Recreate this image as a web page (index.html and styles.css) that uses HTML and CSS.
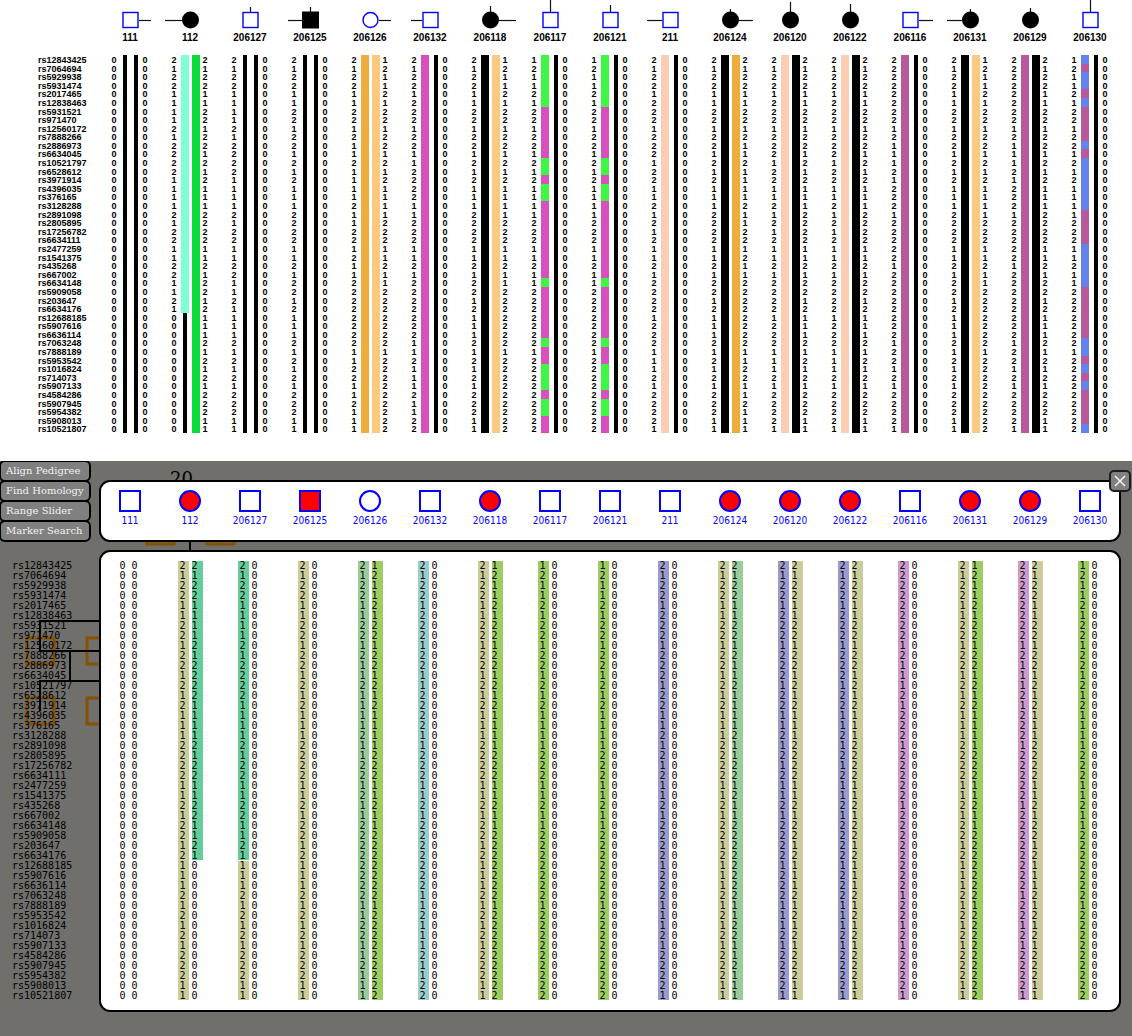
FILE: index.html
```html
<!DOCTYPE html>
<html lang="en">
<head>
  <meta charset="utf-8">
  <title>Haplotype viewer</title>
  <link rel="stylesheet" href="styles.css">
</head>
<body>
  <section class="print-view" aria-label="Printed haplotypes">
    <table class="bars">
      <thead><tr class="line" id="print-head"><td></td></tr></thead>
      <tbody class="bars-body" id="print-body"></tbody>
    </table>
  </section>

  <main class="viewer">
    <svg class="pedigree" width="1132" height="300" aria-hidden="true">
      <g class="kin">
        <rect x="147" y="54" width="27" height="29"/>
        <rect x="207" y="54" width="27" height="29"/>
        <rect x="27" y="177" width="27" height="26"/>
        <rect x="87" y="177" width="27" height="26"/>
        <rect x="27" y="237" width="27" height="26"/>
        <rect x="87" y="237" width="27" height="26"/>
      </g>
      <path class="descent" d="M190 70V100M110 160H40V190H110M70 190V220M110 220H40V250"/>
      <text class="generation" x="170" y="24">20</text>
    </svg>

    <div class="top-row">
      <nav class="tools">
        <button type="button">Align Pedigree</button>
        <button type="button">Find Homology</button>
        <button type="button">Range Slider</button>
        <button type="button">Marker Search</button>
      </nav>
      <div class="people-panel">
        <ul class="people" id="people"></ul>
      </div>
    </div>

    <table class="alleles">
      <tbody class="alleles-body" id="viewer-body"></tbody>
    </table>

    <button type="button" class="close" aria-label="Close">
      <svg width="18" height="18" viewBox="0 0 18 18"><path d="M4 4L14 14M14 4L4 14"/></svg>
    </button>
  </main>
  <script src="haplotypes.js"></script>
</body>
</html>
```
FILE: styles.css
```css
* {
  box-sizing: border-box;
}

body {
  margin: 0;
  background: #fff;
  color: #000;
}

table {
  display: block;
  border-spacing: 0;
}

thead {
  display: block;
}

td,
th {
  padding: 0;
  font-weight: inherit;
  text-align: left;
}

.line {
  display: grid;
  grid-template-columns: 100px repeat(17, minmax(0, 1fr));
  padding-right: 12px;
}

/* printed view */

.print-view {
  padding-bottom: 28px;
  font: bold 9px/8px "Liberation Sans", Arial, sans-serif;
}

.bars .person {
  height: 55px;
  font-size: 10px;
  line-height: 12px;
  text-align: center;
}

.person svg {
  display: block;
  margin: 0 auto;
  overflow: visible;
}

.bars-body {
  display: grid;
  grid-template-rows: repeat(44, minmax(0, 1fr));
  height: 378px;
}

.bars .marker {
  padding: 1px 0 0 38px;
}

.bars .pair {
  display: grid;
  grid-template-columns: 6px 8px 8px 6px;
  column-gap: 3px;
  justify-content: center;
}

.bars .allele {
  padding-top: 1px;
}

.bar {
  background: #000;
}

.bar.thin {
  width: 4px;
  margin-left: 2px;
}

.bar.aqua { background: #7fffd4; }
.bar.emerald { background: #0bdb3c; }
.bar.amber { background: #edad3c; }
.bar.apricot { background: #fdc97f; }
.bar.magenta { background: #d94fbd; }
.bar.lime { background: #3ff546; }
.bar.peach { background: #fccdb2; }
.bar.plum { background: #ba589c; }
.bar.blue { background: #6482eb; }

.stroke-own {
  fill: #fff;
  stroke: #00f;
  stroke-width: 1.4;
}

.fill-own {
  fill: #000;
}

.tie {
  stroke: #111;
  stroke-width: 1.2;
}

/* interactive view */

.viewer {
  position: relative;
  overflow: hidden;
  padding-bottom: 24px;
  background: #706f6c;
}

.pedigree {
  position: absolute;
  left: 0;
  top: 0;
}

.kin {
  fill: none;
  stroke: #855300;
  stroke-width: 3;
}

.descent {
  fill: none;
  stroke: #000;
  stroke-width: 2;
}

.generation {
  font: 18px "DejaVu Serif", serif;
}

.top-row {
  position: relative;
  display: flex;
  align-items: flex-end;
  gap: 8px;
  margin: -1px 11px 0 -1px;
}

.tools {
  display: flex;
  flex-direction: column;
  width: 92px;
}

.tools button {
  height: 22px;
  margin-bottom: -2px;
  padding: 0 0 0 5px;
  border: 2px solid #000;
  border-radius: 6px;
  background: #808080;
  color: #f2f2f2;
  font: 10px/18px "DejaVu Serif", serif;
  text-align: left;
  white-space: nowrap;
}

.tools button:last-child {
  margin-bottom: 0;
}

.people-panel {
  flex: 1;
  height: 62px;
  padding-top: 8px;
  border: 2px solid #000;
  border-radius: 11px;
  background: #fff;
}

.people {
  display: grid;
  grid-template-columns: repeat(17, minmax(0, 1fr));
  margin: 0 -1px;
  padding: 0;
  list-style: none;
  color: #00f;
  font: 10px/18px "DejaVu Sans Condensed", "DejaVu Sans", sans-serif;
  text-align: center;
}

.symbol {
  fill: #fff;
  stroke: #00f;
  stroke-width: 2;
}

.symbol.affected {
  fill: #f00;
}

.alleles {
  position: relative;
  margin-top: 8px;
  padding: 10px 0 12px;
  font: 10px/12px "DejaVu Sans Mono", monospace;
}

.alleles::before {
  content: "";
  position: absolute;
  inset: 0 11px 0 99px;
  border: 2px solid #000;
  border-radius: 11px;
  background: #fff;
}

.alleles-body {
  position: relative;
  display: block;
}

.alleles .line {
  height: 10px;
}

.alleles .marker {
  padding-left: 12px;
}

.alleles .pair {
  display: grid;
  grid-template-columns: 11px 11px;
  column-gap: 3px;
  justify-content: center;
  height: 10px;
}

.hap {
  height: 10px;
}

.hap:first-child {
  padding-left: 2px;
}

.hap.start {
  box-shadow: inset 0 1px #fff;
}

.hap.khaki { background: #cccc9a; }
.hap.teal { background: #66cc9c; }
.hap.sage { background: #9acc9a; }
.hap.green { background: #9ccc62; }
.hap.sky { background: #9acccc; }
.hap.violet { background: #9a9acc; }
.hap.orchid { background: #cc9acc; }

.close {
  position: absolute;
  top: 9px;
  right: 1px;
  width: 22px;
  height: 22px;
  padding: 0;
  border: 2px solid #1c1c1c;
  border-radius: 5px;
  background: #808080;
}

.close svg {
  display: block;
  fill: none;
  stroke: #fff;
  stroke-width: 1.4;
}
```
FILE: haplotypes.js
```javascript
const markers = ("rs12843425 rs7064694 rs5929938 rs5931474 rs2017465 rs12838463 rs5931521 rs971470 " +
  "rs12560172 rs7888266 rs2886973 rs6634045 rs10521797 rs6528612 rs3971914 rs4396035 rs376165 " +
  "rs3128288 rs2891098 rs2805895 rs17256782 rs6634111 rs2477259 rs1541375 rs435268 rs667002 " +
  "rs6634148 rs5909058 rs203647 rs6634176 rs12688185 rs5907616 rs6636114 rs7063248 rs7888189 " +
  "rs5953542 rs1016824 rs714073 rs5907133 rs4584286 rs5907945 rs5954382 rs5908013 rs10521807").split(" ");

// Founder haplotypes, one digit per marker
const K = "21221122122121211122221121221211121212122211";
const T = "212211112122221111212211221121" + "0".repeat(14);
const S = "21221122121121111211221211222222221122112111";
const G = "12112122122121211112221121122222221222222222";
const C = "21221222122112222112221121222222211211121122";
const P = "21221222122212211212121121222212221112122221";
const M = "22222222121112122212222212222222212212122221";
const O = "0".repeat(44);
const TK = T.slice(0, 30) + K.slice(30);

const mosaic = "lime 6 magenta 6 lime 2 magenta 1 lime 2 magenta 9 lime 1 magenta 6 lime 1 magenta 2 lime 3 magenta 1 lime 2 magenta 2";
const mosaic2 = "blue 1 plum 1 blue 2 plum 1 blue 1 plum 4 blue 1 plum 1 blue 6 plum 4 blue 5 plum 6 blue 2 plum 1 blue 1 plum 1 blue 1 plum 4 blue 1";

// ties: l / r = mate line length, u = parent line start
// print / view = [left digits, right digits, left colours, right colours]
const people = [
  { id: "111", sex: "m", r: 12, print: [O, O, "thin 44", "thin 44"], view: [O, O, "", ""] },
  { id: "112", sex: "f", hit: 1, l: 17, print: [T, K, "aqua 30 thin 14", "emerald 44"], view: [K, T, "khaki 44", "teal 30"] },
  { id: "206127", sex: "m", u: 7, print: [TK, O, "thin 44", "thin 44"], view: [TK, O, "teal 30 khaki 14", ""] },
  { id: "206125", sex: "m", hit: 1, l: 14, u: 7, print: [K, O, "thin 44", "thin 44"], view: [K, O, "khaki 44", ""] },
  { id: "206126", sex: "f", r: 12, print: [S, G, "amber 44", "apricot 44"], view: [S, G, "sage 44", "green 44"] },
  { id: "206132", sex: "m", l: 11, print: [C, O, "magenta 44", "thin 44"], view: [C, O, "sky 44", ""] },
  { id: "206118", sex: "f", hit: 1, r: 17, u: 6, print: [K, G, "black 44", "apricot 44"], view: [K, G, "khaki 44", "green 44"] },
  { id: "206117", sex: "m", u: 0, print: [G, O, mosaic, "thin 44"], view: [G, O, "green 44", ""] },
  { id: "206121", sex: "m", u: 5, print: [G, O, mosaic, "thin 44"], view: [G, O, "green 44", ""] },
  { id: "211", sex: "m", l: 15, print: [P, O, "peach 44", "thin 44"], view: [P, O, "violet 44", ""] },
  { id: "206124", sex: "f", hit: 1, r: 14, u: 9, print: [K, S, "black 44", "amber 44"], view: [K, S, "khaki 44", "sage 44"] },
  { id: "206120", sex: "f", hit: 1, u: 2, print: [P, K, "peach 44", "black 44"], view: [P, K, "violet 44", "khaki 44"] },
  { id: "206122", sex: "f", hit: 1, u: 4, print: [P, K, "peach 44", "black 44"], view: [P, K, "violet 44", "khaki 44"] },
  { id: "206116", sex: "m", r: 14, print: [M, O, "plum 44", "thin 44"], view: [M, O, "orchid 44", ""] },
  { id: "206131", sex: "f", hit: 1, l: 15, u: 9, print: [K, G, "black 44", "apricot 44"], view: [K, G, "khaki 44", "green 44"] },
  { id: "206129", sex: "f", hit: 1, u: 8, print: [M, K, "plum 44", "black 44"], view: [M, K, "orchid 44", "khaki 44"] },
  { id: "206130", sex: "m", u: 0, print: [G, O, mosaic2, "thin 44"], view: [G, O, "green 44", ""] }
];

// "lime 6 magenta 2" -> one {color, start} entry per marker
function expand(runs) {
  const out = [];
  const parts = runs ? runs.split(" ") : [];
  for (let i = 0; i < parts.length; i += 2) {
    for (let n = 0; n < Number(parts[i + 1]); n++) out.push({ color: parts[i], start: n === 0 });
  }
  return out;
}

function printSymbol(p) {
  const kind = p.hit ? "fill-own" : "stroke-own";
  const size = p.hit ? 17 : 15;
  const shape = p.sex === "f"
    ? `<circle class="${kind}" cx="30.5" cy="20" r="${size / 2}"/>`
    : `<rect class="${kind}" x="${30.5 - size / 2}" y="${20 - size / 2}" width="${size}" height="${size}"/>`;
  let ties = "";
  if (p.l) ties += `<path class="tie" d="M22 20.5H${22 - p.l}"/>`;
  if (p.r) ties += `<path class="tie" d="M39 20.5H${39 + p.r}"/>`;
  if (p.u !== undefined) ties += `<path class="tie" d="M30.5 ${p.u}V12"/>`;
  return `<svg width="60" height="32">${ties}${shape}</svg>`;
}

function viewSymbol(p) {
  const cls = p.hit ? "symbol affected" : "symbol";
  const shape = p.sex === "f"
    ? `<circle class="${cls}" cx="11" cy="11" r="10"/>`
    : `<rect class="${cls}" x="1" y="1" width="20" height="20"/>`;
  return `<svg width="22" height="22">${shape}</svg>`;
}

const printRuns = people.map(p => [expand(p.print[2]), expand(p.print[3])]);
const viewRuns = people.map(p => [expand(p.view[2]), expand(p.view[3])]);

document.getElementById("print-head").innerHTML += people
  .map(p => `<th class="person" scope="col">${printSymbol(p)}${p.id}</th>`).join("");

document.getElementById("people").innerHTML = people
  .map(p => `<li class="person">${viewSymbol(p)}${p.id}</li>`).join("");

document.getElementById("print-body").innerHTML = markers.map((name, i) =>
  `<tr class="line"><th class="marker" scope="row">${name}</th>` + people.map((p, n) =>
    `<td class="pair"><span class="allele">${p.print[0][i]}</span>` +
    `<span class="bar ${printRuns[n][0][i].color}"></span>` +
    `<span class="bar ${printRuns[n][1][i].color}"></span>` +
    `<span class="allele">${p.print[1][i]}</span></td>`).join("") + "</tr>").join("");

document.getElementById("viewer-body").innerHTML = markers.map((name, i) =>
  `<tr class="line"><th class="marker" scope="row">${name}</th>` + people.map((p, n) =>
    `<td class="pair">` + [0, 1].map(side => {
      const run = viewRuns[n][side][i];
      const cls = run ? `hap ${run.color}${run.start ? " start" : ""}` : "hap";
      return `<span class="${cls}">${p.view[side][i]}</span>`;
    }).join("") + "</td>").join("") + "</tr>").join("");
```
